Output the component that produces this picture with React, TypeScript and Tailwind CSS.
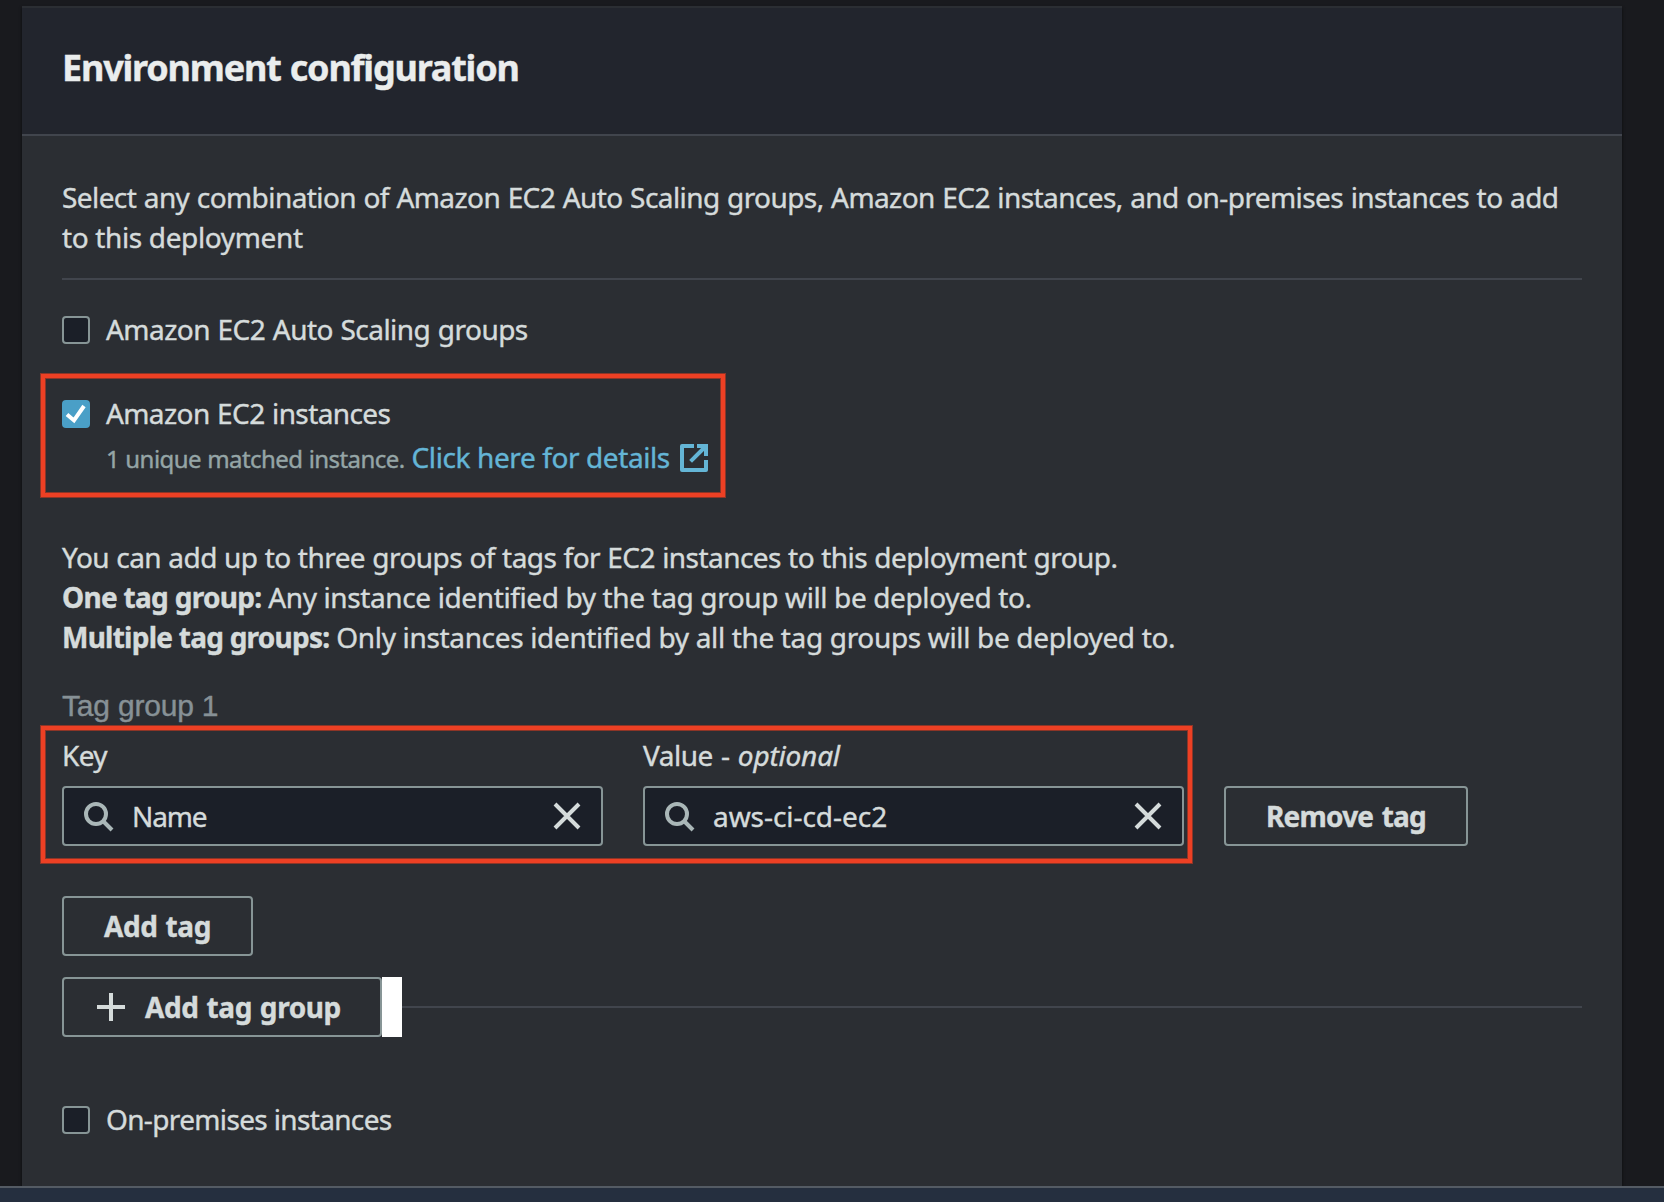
import type { ReactNode } from 'react';

function Checkbox({ checked = false, label, tracking }: { checked?: boolean; label: string; tracking: string }) {
  return (
    <label className="flex h-10 items-center gap-4">
      <span
        className={
          checked
            ? 'mb-[-2px] flex size-7 items-center justify-center rounded-[4px] bg-[#4a9fc7]'
            : 'mb-[-2px] size-7 rounded-[4px] border-2 border-[#879596] bg-[#1b1f28]'
        }
      >
        {checked && (
          <svg viewBox="0 0 14 14" className="size-7" fill="none" stroke="#fff" strokeWidth="2">
            <polyline points="2.5,7.2 6,10.2 11,3" />
          </svg>
        )}
      </span>
      <span className={tracking}>{label}</span>
    </label>
  );
}

function SearchField({ label, value, tracking }: { label: ReactNode; value: string; tracking: string }) {
  return (
    <div className="w-[541px]">
      <div className="h-10">{label}</div>
      <div className="mt-[11px] flex h-[60px] items-center rounded-[4px] border-2 border-[#879596] bg-[#1b1f28] px-[18px]">
        <svg viewBox="0 0 16 16" className="size-8 shrink-0" fill="none" stroke="#aab7b8" strokeWidth="2">
          <circle cx="7" cy="7" r="5" />
          <path d="m15 15-4.5-4.5" />
        </svg>
        <span className={tracking}>{value}</span>
        <svg viewBox="0 0 16 16" className="ml-auto size-8 shrink-0" fill="none" stroke="#d5dbdb" strokeWidth="2">
          <path d="m2 2 12 12M14 2 2 14" />
        </svg>
      </div>
    </div>
  );
}

function Button({ className, children }: { className: string; children: ReactNode }) {
  return (
    <button
      className={`flex h-[60px] shrink-0 items-center justify-center rounded-[4px] border-2 border-[#879596] font-bold ${className}`}
    >
      {children}
    </button>
  );
}

function Highlight({ className }: { className: string }) {
  return (
    <div
      className={`pointer-events-none absolute border-4 border-[#ed4024] shadow-[0_0_0_1px_#8d3527,inset_0_0_0_1px_#8d3527] ${className}`}
    />
  );
}

export default function App() {
  return (
    <div className="relative flex h-[1202px] w-[1664px] flex-col overflow-hidden bg-[#191a1e] font-['Noto_Sans',sans-serif] text-[28px] leading-10 text-[#d5dbdb] [-webkit-text-stroke:0.4px]">
      <section className="mt-[6px] ml-[22px] flex w-[1600px] flex-1 flex-col border-t-2 border-[#2b2e33] bg-[#2b2e33] shadow-[0_2px_3px_0_rgba(0,0,0,0.6)]">
        <header className="h-32 border-b-2 border-[#41454d] bg-[#22252d] px-10 pt-[38px]">
          <h2 className="text-4xl leading-[44px] font-bold tracking-[-1.2px] [word-spacing:1px] text-[#eaeded]">
            Environment configuration
          </h2>
        </header>

        <div className="px-10 pt-[41px]">
          <p className="h-[101px] whitespace-nowrap">
            <span className="tracking-[-0.58px] [word-spacing:0.8px]">
              Select any combination of Amazon EC2 Auto Scaling groups, Amazon EC2 instances, and on-premises instances
              to add
            </span>
            <br />
            <span className="tracking-[-0.36px]">to this deployment</span>
          </p>
          <hr className="border-t-2 border-[#41454d]" />

          <div className="mt-[29px]">
            <Checkbox label="Amazon EC2 Auto Scaling groups" tracking="tracking-[-0.53px] [word-spacing:0.8px]" />
          </div>

          <div className="mt-11">
            <Checkbox checked label="Amazon EC2 instances" tracking="tracking-[-0.6px] [word-spacing:0.8px]" />
            <div className="mt-1 flex h-10 items-baseline pl-11 whitespace-nowrap">
              <span className="text-2xl leading-10 tracking-[-0.56px] [word-spacing:0.5px] text-[#95a5a6]">
                1 unique matched instance.
              </span>
              <a className="ml-[7px] flex text-[#64b5d6]">
                <span className="tracking-[-0.4px]">Click here for details</span>
                <svg
                  viewBox="0 0 16 16"
                  className="mt-[5px] ml-2 size-8"
                  fill="none"
                  stroke="currentColor"
                  strokeWidth="2"
                  strokeLinejoin="round"
                >
                  <path d="M14 9v5H2V2h6" />
                  <path d="M9.5 2H14v5" strokeLinejoin="miter" />
                  <path d="m6.3 9.7 7.2-7.2" />
                </svg>
              </a>
            </div>
          </div>

          <div className="mt-[60px] whitespace-nowrap">
            <p className="tracking-[-0.55px] [word-spacing:0.5px]">
              You can add up to three groups of tags for EC2 instances to this deployment group.
            </p>
            <p className="tracking-[-0.38px]">
              <b className="tracking-[-0.7px]">One tag group:</b> Any instance identified by the tag group will be
              deployed to.
            </p>
            <p className="tracking-[-0.34px]">
              <b className="tracking-[-0.75px]">Multiple tag groups:</b> Only instances identified by all the tag groups
              will be deployed to.
            </p>
          </div>

          <h3 className="mt-[29px] h-10 font-['Liberation_Sans',sans-serif] text-[30px] tracking-[-0.2px] text-[#879196]">
            Tag group 1
          </h3>

          <div className="mt-[9px] flex items-end gap-10">
            <SearchField
              label={<span className="tracking-[-0.6px]">Key</span>}
              value="Name"
              tracking="ml-[18px] tracking-[-1.1px]"
            />
            <SearchField
              label={
                <span className="tracking-[-0.5px] [word-spacing:1.5px]">
                  Value - <i className="tracking-[-0.2px]">optional</i>
                </span>
              }
              value="aws-ci-cd-ec2"
              tracking="ml-[18px] tracking-[-0.05px]"
            />
            <Button className="w-[244px] tracking-[-0.8px] [word-spacing:2px]">Remove tag</Button>
          </div>

          <Button className="mt-[50px] w-[191px] tracking-[-0.4px] [word-spacing:1px]">Add tag</Button>

          <div className="mt-[21px] flex items-center">
            <Button className="w-80 gap-[18px] pr-2 tracking-[-0.4px] [word-spacing:1px]">
              <svg viewBox="0 0 16 16" className="size-8" stroke="#d5dbdb" strokeWidth="2">
                <path d="M8 1v14M1 8h14" />
              </svg>
              Add tag group
            </Button>
            <div className="h-[60px] w-5 bg-white" />
            <hr className="flex-1 border-t-2 border-[#41454d]" />
          </div>

          <div className="mt-[62px]">
            <Checkbox label="On-premises instances" tracking="tracking-[-0.65px]" />
          </div>
        </div>
      </section>

      <footer className="relative h-4 shrink-0 border-t-2 border-[#545b64] bg-[#252f3f]" />

      <Highlight className="top-[374px] left-[41px] h-[123px] w-[684px]" />
      <Highlight className="top-[726px] left-[41px] h-[137px] w-[1151px]" />
    </div>
  );
}
